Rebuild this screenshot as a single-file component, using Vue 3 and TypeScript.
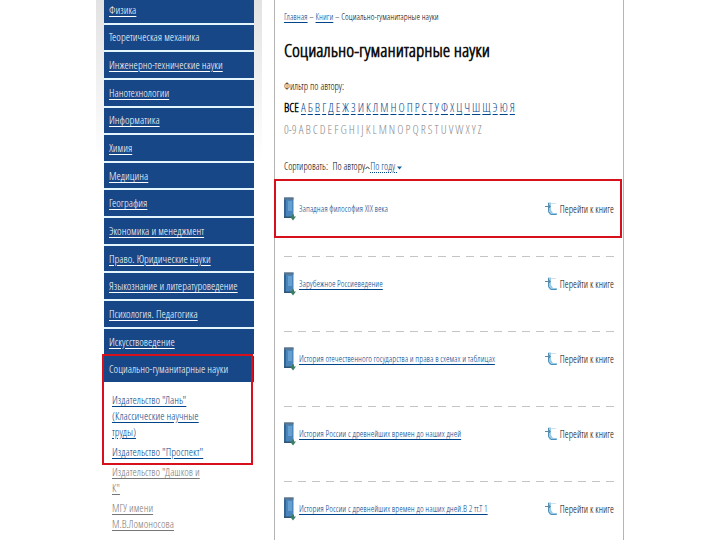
<script setup lang="ts">
interface Publisher {
  name: string
  active: boolean
}

const subjects: string[] = [
  'Физика',
  'Теоретическая механика',
  'Инженерно-технические науки',
  'Нанотехнологии',
  'Информатика',
  'Химия',
  'Медицина',
  'География',
  'Экономика и менеджмент',
  'Право. Юридические науки',
  'Языкознание и литературоведение',
  'Психология. Педагогика',
  'Искусствоведение',
  'Социально-гуманитарные науки',
]
const plainSubjects = [1, 13]

const publishers: Publisher[] = [
  { name: 'Издательство "Лань" (Классические научные труды)', active: true },
  { name: 'Издательство "Проспект"', active: true },
  { name: 'Издательство "Дашков и К"', active: false },
  { name: 'МГУ имени М.В.Ломоносова', active: false },
  { name: 'Ярославский государственный', active: false },
]

const cyrillic: string[] = [...'АБВГДЕЖЗИКЛМНОПРСТУФХЦЧШЩЭЮЯ']
const latin: string[] = ['0-9', ...'ABCDEFGHIJKLMNOPQRSTUVWXYZ']

const books: string[] = [
  'Западная философия XIX века',
  'Зарубежное Россиеведение',
  'История отечественного государства и права в схемах и таблицах',
  'История России с древнейших времен до наших дней',
  'История России с древнейших времен до наших дней.В 2 тт.Т 1',
]
</script>

<template>
  <div class="page">
    <aside class="sidebar">
      <nav class="subjects">
        <a
          v-for="(subject, i) in subjects"
          :key="subject"
          href="#"
          class="subject"
        ><span :class="{ underlined: !plainSubjects.includes(i) }">{{ subject }}</span></a>
      </nav>
      <ul class="publishers">
        <li v-for="p in publishers" :key="p.name">
          <a href="#" :class="{ muted: !p.active }">{{ p.name }}</a>
        </li>
      </ul>
      <div class="mark mark-side"></div>
    </aside>

    <main class="content">
      <p class="crumbs">
        <a href="#">Главная</a> – <a href="#">Книги</a> – Социально-гуманитарные науки
      </p>
      <h1>Социально-гуманитарные науки</h1>
      <p class="label">Фильтр по автору:</p>
      <div class="letters">
        <b>ВСЕ</b>
        <a v-for="c in cyrillic" :key="c" href="#">{{ c }}</a>
      </div>
      <div class="letters latin">
        <span v-for="c in latin" :key="c">{{ c }}</span>
      </div>
      <p class="sort">
        Сортировать: &nbsp;<span>По автору</span>
        <svg viewBox="0 0 5 4" class="caret"><path d="M0.5 3 L2.5 0.8 L4.5 3" /></svg>
        <a href="#">По году <svg viewBox="0 0 5 4" class="caret solid"><path d="M0 0.5 H5 L2.5 3.5 Z" /></svg></a>
      </p>

      <ul class="books">
        <li v-for="(book, i) in books" :key="book" class="book">
          <svg class="cover" viewBox="0 0 12 24">
            <path d="M0 0.5 H9.5 V20.5 H0 Z" fill="#4a86bb" />
            <path d="M0 0.5 H9.5 V2.5 H0 Z" fill="#5d7286" />
            <path d="M0 2.5 H2 V20.5 H0 Z" fill="#35648f" />
            <path d="M4 4 H8 V14 H4 Z" fill="#66a0d0" />
            <path d="M0 19.5 H8 V21 H0 Z" fill="#2f5475" />
            <path d="M8 17.5 H10 V19.5 H12 L9 23.5 L6 19.5 H8 Z" fill="#397d63" />
          </svg>
          <a href="#" class="title" :class="{ plain: i === 0 }">{{ book }}</a>
          <a href="#" class="go">
            <svg class="go-icon" viewBox="0 0 12 14">
              <path d="M3 0.5 H6 V8 L8 11 H12 V13 H5 L3 10 Z" fill="#9ccbe6" />
              <path d="M3.5 1 V9.5 L6 12.5 H11.5" fill="none" stroke="#4c8fb8" />
              <path d="M0 4.5 H5 M3 2.5 L5.5 4.5 L3 7" fill="none" stroke="#5b8aa6" />
              <path d="M6 1.5 H11" fill="none" stroke="#cfe3ef" />
            </svg>
            Перейти к книге
          </a>
        </li>
      </ul>
      <div class="mark mark-book"></div>
    </main>
  </div>
</template>

<style>
body {
  margin: 0;
  background: #fff;
}
</style>

<style scoped>
.page {
  display: grid;
  grid-template-columns: 166px 1fr;
  column-gap: 12px;
  max-width: 528px;
  height: 100vh;
  margin: 0 auto;
  overflow: hidden;
  font-family: "Open Sans Condensed Light", "Roboto Condensed", sans-serif;
  font-size: 10px;
  line-height: 16px;
  color: #000;
}

ul {
  margin: 0;
  padding: 0;
  list-style: none;
}

p,
h1 {
  margin: 0;
}

a {
  color: #00458a;
  text-underline-offset: 2px;
}

.sidebar {
  position: relative;
  padding: 0 8px;
  background: linear-gradient(#e2e2e2, #fff 160px);
  font-size: 11px;
}

.subjects {
  display: flex;
  flex-direction: column;
  gap: 2px;
  min-height: 385px;
  margin-top: -3px;
  background: #e4f6fb;
}

.subject {
  display: flex;
  flex: 1;
  align-items: center;
  padding-left: 5px;
  background: #184787;
  color: #fff;
  text-decoration: none;
}

.underlined {
  text-decoration: underline;
}

.publishers {
  display: flex;
  flex-direction: column;
  gap: 4px;
  padding: 10px 48px 0 8px;
}

.publishers a.muted {
  color: #777;
}

.mark {
  position: absolute;
  border: 2px solid #d8101c;
  pointer-events: none;
}

.mark-side {
  top: 354px;
  left: 6px;
  right: 9px;
  height: 107px;
}

.mark-book {
  top: 179px;
  left: -1px;
  right: 1px;
  height: 55px;
}

.content {
  position: relative;
  padding: 9px 9px 0;
  border: solid #b4b4b4;
  border-width: 0 1px;
}

.crumbs {
  font-size: 9px;
}

h1 {
  margin-top: 13px;
  font-size: 19px;
  line-height: 24px;
  color: #111;
}

.label {
  margin-top: 16px;
}

.letters {
  display: flex;
  gap: 2px;
  margin-top: 6px;
  font-size: 12px;
}

.latin {
  color: #888;
}

.sort {
  margin-top: 20px;
}

.sort a {
  text-decoration: underline dotted;
}

.caret {
  width: 5px;
  height: 4px;
  fill: none;
  stroke: #333;
}

.caret.solid {
  fill: #17629c;
  stroke: none;
}

.books {
  margin-top: 8px;
}

.book {
  display: flex;
  align-items: flex-start;
  height: 59px;
  padding-top: 15px;
  background: repeating-linear-gradient(90deg, #c4c4c4 0 8px, transparent 8px 14px) bottom / 100% 1px no-repeat;
  border-bottom: 1px solid transparent;
  background-origin: border-box;
}

.cover {
  flex: none;
  width: 12px;
  height: 24px;
  margin-right: 3px;
}

.title {
  flex: 1;
  font-size: 9px;
  line-height: 24px;
}

.plain {
  text-decoration: none;
}

.go {
  display: flex;
  align-items: center;
  gap: 3px;
  line-height: 24px;
  color: #000;
  text-decoration: none;
}

.go-icon {
  width: 12px;
  height: 14px;
}
</style>
